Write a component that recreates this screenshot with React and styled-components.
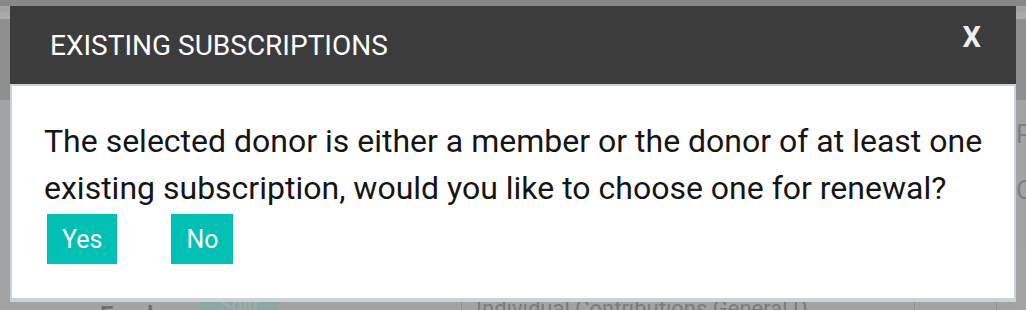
import styled, { createGlobalStyle } from "styled-components";

const GlobalStyle = createGlobalStyle`
	* {
		box-sizing: border-box;
	}
	body {
		margin: 0;
		font-family: Roboto, "Liberation Sans", sans-serif;
		background: #f4f4f4;
		overflow: hidden;
	}
`;

export default function App() {
	return (
		<Screen>
			<GlobalStyle />
			<Page>
				<TopNav />
				<Tabs>
					<TabStrip />
				</Tabs>
				<Content>
					<SideColumn>
						<SideLabel>P</SideLabel>
						<SideLabel>C</SideLabel>
					</SideColumn>
				</Content>
				<FormRow>
					<FieldLabel>Fund</FieldLabel>
					<SplitButton>
						<span>Split</span>
					</SplitButton>
					<FundInput>Individual Contributions General D...</FundInput>
					<Cell />
				</FormRow>
			</Page>
			<Backdrop />
			<Modal>
				<Header>
					<Title>EXISTING SUBSCRIPTIONS</Title>
					<Close>x</Close>
				</Header>
				<Body>
					<Message>
						The selected donor is either a member or the donor of at least one existing
						subscription, would you like to choose one for renewal?
					</Message>
					<Actions>
						<ActionButton>Yes</ActionButton>
						<ActionButton>No</ActionButton>
					</Actions>
				</Body>
			</Modal>
		</Screen>
	);
}

const Screen = styled.div`
	position: relative;
	width: 1026px;
	height: 310px;
	overflow: hidden;
`;

const Page = styled.div`
	display: flex;
	flex-direction: column;
	height: 100%;
`;

const TopNav = styled.div`
	height: 6px;
	background: #cbcbcb;
`;

const Tabs = styled.div`
	margin-top: 6px;
	height: 88px;
	background: #d5d5d5;
`;

const TabStrip = styled.div`
	height: 7px;
	background: #ffffff;
`;

const Content = styled.div`
	flex: 1;
	display: flex;
	justify-content: flex-end;
`;

const SideColumn = styled.div`
	width: 10px;
	overflow: hidden;
	display: flex;
	flex-direction: column;
	gap: 20px;
	padding-top: 16px;
`;

const SideLabel = styled.span`
	font-size: 26px;
	line-height: 36px;
	color: #bcbcbc;
`;

const FormRow = styled.div`
	height: 14px;
	display: flex;
	align-items: flex-start;
	padding-left: 100px;
	overflow: hidden;
`;

const FieldLabel = styled.span`
	width: 100px;
	font-size: 24px;
	font-weight: 700;
	color: #a8a8a8;
	line-height: 24px;
	margin-top: 7px;
`;

const SplitButton = styled.div`
	width: 78px;
	height: 14px;
	background: #cefdf7;
	display: flex;
	justify-content: center;
	color: #ffffff;
	font-size: 20px;
	line-height: 18px;
	overflow: hidden;
`;

const FundInput = styled.div`
	margin-left: 183px;
	width: 454px;
	height: 14px;
	border-left: 1px solid #d9d9d9;
	border-right: 1px solid #d9d9d9;
	padding-left: 14px;
	font-size: 22px;
	line-height: 26px;
	color: #b8b8b8;
	white-space: nowrap;
	overflow: hidden;
`;

const Cell = styled.div`
	width: 82px;
	height: 14px;
	border-right: 1px solid #d9d9d9;
`;

const Backdrop = styled.div`
	position: absolute;
	inset: 0;
	background: rgba(0, 0, 0, 0.33);
`;

const Modal = styled.div`
	position: absolute;
	left: 10px;
	top: 6px;
	width: 1006px;
	display: flex;
	flex-direction: column;
`;

const Header = styled.div`
	height: 78px;
	background: #3c3c3c;
	display: flex;
	align-items: center;
	justify-content: space-between;
	padding: 0 35px 0 40px;
`;

const Title = styled.h2`
	margin: 0;
	font-size: 28px;
	font-weight: 400;
	color: #ffffff;
`;

const Close = styled.span`
	align-self: flex-start;
	margin-top: 14px;
	font-size: 29px;
	line-height: 34px;
	font-weight: 700;
	color: #eeeeee;
	text-transform: uppercase;
	cursor: pointer;
`;

const Body = styled.div`
	background: #ffffff;
	border: 2px solid #c9d3de;
	border-bottom-width: 4px;
	padding: 32px 20px 34px 32px;
`;

const Message = styled.p`
	margin: 0;
	font-size: 32px;
	line-height: 47px;
	color: #151515;
`;

const Actions = styled.div`
	display: flex;
	gap: 54px;
	margin-top: 2px;
	padding-left: 3px;
`;

const ActionButton = styled.button`
	height: 50px;
	padding: 0 15px;
	border: none;
	background: #00bfb3;
	color: #ffffff;
	font-family: Roboto, "Liberation Sans", sans-serif;
	font-size: 25px;
	cursor: pointer;
`;
